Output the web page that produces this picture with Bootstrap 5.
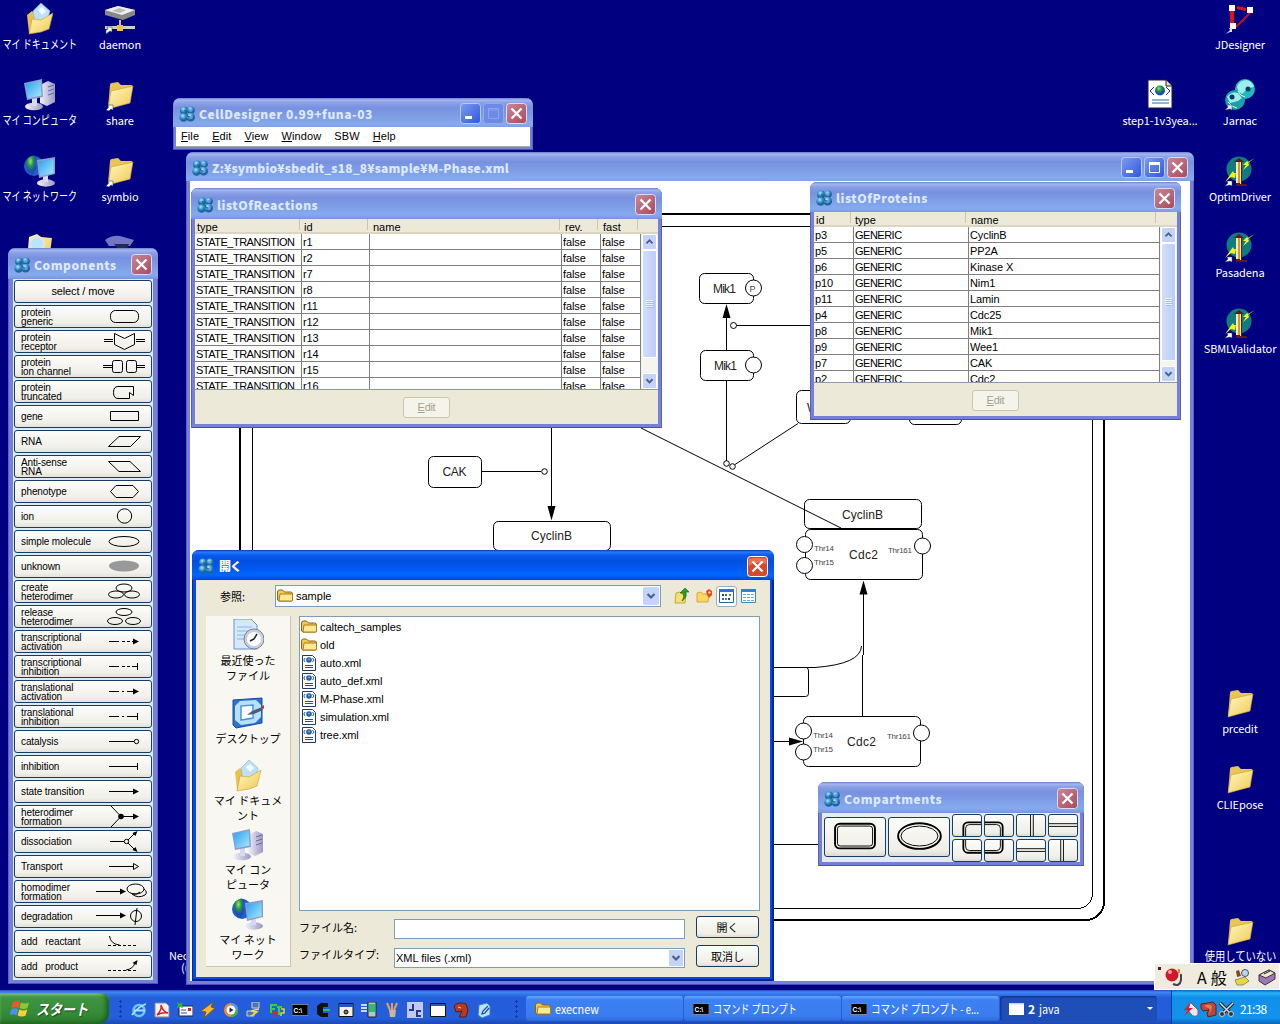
<!DOCTYPE html>
<html lang="ja">
<head>
<meta charset="utf-8">
<title>CellDesigner</title>
<link href="https://cdn.jsdelivr.net/npm/bootstrap@5.3.0/dist/css/bootstrap.min.css" rel="stylesheet">
<style>
body{width:1280px;height:1024px;overflow:hidden;background:#000080;position:relative;font:11px/14px "Liberation Sans","Noto Sans CJK JP",sans-serif;color:#000}
svg{display:block;flex:none}
.jp{font-family:"Noto Sans CJK JP",sans-serif}
.desk{display:grid;grid-template-columns:repeat(16,80px);grid-template-rows:repeat(13,76px);position:absolute;inset:0 0 auto 0}
.ico{display:flex;flex-direction:column;align-items:center;padding-top:3px;color:#fff;min-width:0;font:11px/14px "Noto Sans CJK JP",sans-serif}
.ico span{white-space:nowrap;margin-top:2px;letter-spacing:-.1px}
.ico .sq{transform:scaleX(.75);font-size:12px;letter-spacing:.1px}
.ico .sk{transform:scaleX(.86);font-size:12px}
.win{position:absolute;background:#7680d8;border-radius:7px 7px 0 0;padding:0 4px 4px;display:flex;flex-direction:column;box-shadow:inset 1px 0 #5a62c0,inset -1px 0 #5a62c0,inset 0 -1px #4a50b4;overflow:hidden}
.tbar{height:31px;margin:0 -4px;padding:2px 6px 0 6px;flex:none;display:flex;align-items:center;background:linear-gradient(#6a80cc 0,#a3b6f0 2px,#8aa0e6 5px,#7891df 10px,#7f9ee6 19px,#84aaee 26px,#80a0e8 29px,#7890de 31px);border-radius:7px 7px 0 0;color:#dce8fb;font:bold 12px/16px "Noto Sans CJK JP",sans-serif}
.tbar b{margin-left:4px;flex:1;white-space:nowrap;letter-spacing:.55px}
.tbar .wb{margin-left:2px}
.face{background:#ece9d8}
#w1{left:173px;top:98px;width:360px;height:52px}
#w1 .tbar{height:29px}
#w2{left:186px;top:152px;width:1008px;height:833px}
#w2 .tbar{height:29px}
#w2 .tbar b{letter-spacing:.2px}
#w3{left:191px;top:188px;width:471px;height:240px}
#w4{left:810px;top:182px;width:371px;height:238px}
#w4 .tbar{height:30px}
#w5{left:8px;top:248px;width:150px;height:736px}
#w6{left:818px;top:782px;width:266px;height:84px}
#dlg{left:192px;top:550px;width:582px;height:431px;background:#0a4be0;box-shadow:inset 1px 0 #0026a8,inset -2px 0 #0026a8,inset 0 -2px #00208c}
#dlg .tbar{height:30px;background:linear-gradient(#0038b8 0,#2a7cf8 2px,#0a5cf0 5px,#0050e0 11px,#0058f0 18px,#0066ff 25px,#0050e0 29px,#003cc0 30px);color:#fff}
.menu{background:#fff;height:20px;display:flex;gap:13px;padding:2px 5px;font-size:11px;letter-spacing:.1px;line-height:15px;border-bottom:1px solid #aaa;margin:0 -1px}
.grid{border-collapse:separate;border-spacing:0;table-layout:fixed;width:100%;background:#fff}
.grid td{height:16px;border-right:1px solid #808080;border-bottom:1px solid #808080;padding:1px 1px 0;line-height:14px;white-space:nowrap;letter-spacing:-.1px}
.grid .up{letter-spacing:-.5px}
.hdr{height:15px;display:flex;flex:none;border-bottom:2px solid #dbd6c2;line-height:16px}
.hdr div{border-right:1px solid #c9c5b2;padding-left:2px;height:11px}
.hdr div+div{padding-left:5px}
.tb{height:156px;display:flex;overflow:hidden;flex:none;border-bottom:1px solid #8a98ac;background:#fff}
.sb{width:17px;flex:none;display:flex;flex-direction:column;background:#f6f4ee;padding:0 1px}
.arr{display:block;height:16px;border:1px solid #fff;border-radius:2px;background:#c3d3fc}
.thumb{flex:none;background:linear-gradient(90deg,#d0defd,#bccdfa);border:1px solid #fff;border-radius:2px;display:flex;align-items:center;justify-content:center}
.dbtn{width:47px;height:21px;border:1px solid #cac6b4;border-radius:3px;background:#f5f4ea;color:#a5a290;text-align:center;line-height:19px;letter-spacing:-.3px}
.cmp{background:#d9eaf2;padding:1px 1px 0 1px;flex:1;display:flex;flex-direction:column;gap:2px;margin:0 1px}
.cb{height:23px;flex:none;border:1px solid #173c68;border-radius:3px;background:linear-gradient(#fcfcfa,#f0efe8 80%,#e3e1d8);display:flex;align-items:center;padding-left:6px;font-size:10px;line-height:9px;letter-spacing:-.12px}
.cb svg{margin:-1px 1px -1px auto}
.ln{fill:none;stroke:#000;stroke-width:1}
.xb{border:1px solid #173c68;border-radius:3px;background:linear-gradient(#fcfcfa,#efeee6 85%,#dedbd0);overflow:hidden}
.fld{background:#fff;border:1px solid #7f9db9;display:flex;align-items:center}
.side{width:85px;background:#f8f7f2;border-right:1px solid #c9c5b2;border-bottom:1px solid #c9c5b2;position:relative;display:flex;flex-direction:column;align-items:center;font:11px/15px "Noto Sans CJK JP",sans-serif;text-align:center}
.fr{height:18px;display:flex;align-items:center;gap:3px;padding-left:1px;letter-spacing:-.05px}
#task{position:absolute;left:0;top:990px;width:1280px;height:34px;background:linear-gradient(#1f49b8 0,#3f86f4 2px,#3577ea 4px,#245ddb 8px,#245edc 28px,#1c48b0 34px);display:flex;align-items:stretch;color:#fff;font:12px/16px "Noto Sans CJK JP",sans-serif}
.start{width:109px;margin-top:3px;background:linear-gradient(#5eac56 0,#3f9440 5px,#358b37 20px,#2b7a2d 31px);border-radius:0 8px 10px 0;box-shadow:inset -3px -1px 4px #1c5e1f,inset 0 2px 2px #8acb80;display:flex;align-items:center;padding-left:10px;gap:6px;font:italic bold 15px/20px "Noto Sans CJK JP",sans-serif;text-shadow:1px 1px 1px #1c4a1d}
.start span{transform:scaleX(.87);transform-origin:0 0}
.tk{width:157px;height:25px;margin:6px 1px 0 0;background:linear-gradient(#6aa4fa,#3c81f3 4px,#3a7cf0 20px,#2f68d8);border-radius:3px;display:flex;align-items:center;padding-left:9px;gap:4px;white-space:nowrap;flex:none}
.tk span{transform-origin:0 0}
.tk.on{background:#1e4fb8;box-shadow:inset 1px 1px 2px #10307c}
.tray{width:109px;margin-left:auto;background:linear-gradient(#0c60c8 0,#27b1f5 3px,#1290e9 7px,#1292ea 28px,#0c64c0 34px);border-left:1px solid #0a3fa8;display:flex;align-items:center;padding:4px 0 0 10px;gap:1px}
.dots{width:6px;height:20px;margin-top:9px;background:radial-gradient(circle,#143a9c 1px,transparent 1.3px) 0 0/5px 5px}
.ime{position:absolute;left:1154px;top:963px;width:126px;height:27px;background:#efecdf;border:1px solid #fff;display:flex;align-items:center;font:16px/20px "Noto Sans CJK JP",sans-serif}
</style>
<script src="https://cdn.jsdelivr.net/npm/bootstrap@5.3.0/dist/js/bootstrap.bundle.min.js"></script>
</head>
<body>
<svg width="0" height="0" class="position-absolute">
<defs>
<linearGradient id="gf" x1="0" y1="0" x2="1" y2="1"><stop offset="0" stop-color="#fff9c4"/><stop offset="1" stop-color="#f0c850"/></linearGradient>
<linearGradient id="gs" x1="0" y1="0" x2="1" y2="1"><stop offset="0" stop-color="#2e9cec"/><stop offset="1" stop-color="#a5ecff"/></linearGradient>
<linearGradient id="gg" x1="0" y1="0" x2="1" y2="0"><stop offset="0" stop-color="#f2f2fa"/><stop offset="1" stop-color="#9a98c4"/></linearGradient>
<radialGradient id="gw" cx=".4" cy=".3"><stop offset="0" stop-color="#9be86a"/><stop offset=".5" stop-color="#2a9a3a"/><stop offset="1" stop-color="#1c50b0"/></radialGradient>
<radialGradient id="gl" cx=".4" cy=".3"><stop offset="0" stop-color="#b4e6fa"/><stop offset=".45" stop-color="#54acdc"/><stop offset="1" stop-color="#1a669e"/></radialGradient>
<linearGradient id="gc" x1="0" y1="0" x2="1" y2="1"><stop offset="0" stop-color="#c88a98"/><stop offset="1" stop-color="#a8485a"/></linearGradient>
<linearGradient id="gb" x1="0" y1="0" x2="1" y2="1"><stop offset="0" stop-color="#7d9cf2"/><stop offset="1" stop-color="#2f55dc"/></linearGradient>
<symbol id="logo" viewBox="0 0 16 16"><circle cx="5" cy="4.500" r="4" fill="url(#gl)"/><circle cx="12" cy="4.200" r="3.800" fill="url(#gl)"/><circle cx="4.600" cy="11.500" r="4.200" fill="url(#gl)"/><circle cx="11.600" cy="11.200" r="4.400" fill="url(#gl)"/><circle cx="12" cy="4.500" r="1.300" fill="#7a96e2"/><circle cx="12" cy="11.500" r="1.500" fill="#7a96e2"/><path d="M5 4.500q3 0 3 3.500t3 3" fill="none" stroke="#1c5f96" stroke-width="1"/></symbol>
<symbol id="cls" viewBox="0 0 21 21"><rect x=".5" y=".5" width="20" height="20" rx="3" fill="url(#gc)" stroke="#d8dcf8"/><path d="M5.500 5.500l10 10M15.500 5.500l-10 10" stroke="#fff" stroke-width="2.300"/></symbol>
<symbol id="clr" viewBox="0 0 21 21"><rect x=".5" y=".5" width="20" height="20" rx="3" fill="#d8482a" stroke="#fff"/><path d="M1.500 3q9-2 18 0v5q-9-4-18 2z" fill="#e87458"/><path d="M5.500 5.500l10 10M15.500 5.500l-10 10" stroke="#fff" stroke-width="2.300"/></symbol>
<symbol id="min" viewBox="0 0 21 21"><rect x=".5" y=".5" width="20" height="20" rx="3" fill="url(#gb)" stroke="#b8c8fa"/><path d="M5 13h7v3H5z" fill="#fff"/></symbol>
<symbol id="max" viewBox="0 0 21 21"><rect x=".5" y=".5" width="20" height="20" rx="3" fill="url(#gb)" stroke="#b8c8fa"/><path d="M5.500 5.500h10v10h-10z" fill="none" stroke="#fff"/><path d="M5 5h11v3H5z" fill="#fff"/></symbol>
<symbol id="mxd" viewBox="0 0 21 21"><rect x=".5" y=".5" width="20" height="20" rx="3" fill="#6d8be2" stroke="#94a8ee"/><path d="M5.500 5.500h10v10h-10zM5 7h11" fill="none" stroke="#8ba4ee"/></symbol>
<symbol id="folder" viewBox="0 0 32 32"><path d="M4 29L6 6q0-2 2-2l6-1 3 3 10 0q2 0 1 2l-2 16z" fill="#e8c45a"/><path d="M4 30L7 12 29 7l-3 17z" fill="url(#gf)" stroke="#c89a28" stroke-width=".6"/></symbol>
<symbol id="short" viewBox="0 0 32 32"><use href="#folder"/><path d="M2 31l3-3-1-2h5v5l-2-1-2 2z" fill="#fff" stroke="#345" stroke-width=".6"/></symbol>
<symbol id="mydoc" viewBox="0 0 32 32"><path d="M3 12l5-4 4 4v18H5z" fill="#e9c14c"/><path d="M9 8L17 0l9 8-4 14-11-2z" fill="#bfe0fa" stroke="#7ab0e0" stroke-width=".6"/><path d="M14 7l4-3 4 4-4 4z" fill="#f2fbff"/><path d="M5 31l3-15 9 1 12-7-4 16-8 3z" fill="url(#gf)" stroke="#c89a28" stroke-width=".6"/></symbol>
<symbol id="pc" viewBox="0 0 32 32"><path d="M16 6l8-4 7 3v18l-8 4-7-3z" fill="url(#gg)"/><path d="M24 8l6-2M24 12l6-2M24 16l6-2" stroke="#6a68a0"/><ellipse cx="10" cy="27.500" rx="9" ry="3.800" fill="url(#gg)"/><path d="M8 19h5v8H8z" fill="#d8d8ee"/><path d="M0 4l18-4 1 18-16 3z" fill="#8e9ccc"/><path d="M1.500 5l15-3.500 1 15-13.500 2.800z" fill="url(#gs)"/></symbol>
<symbol id="net" viewBox="0 0 32 32"><circle cx="10" cy="11" r="10" fill="#2060c8"/><path d="M3 4q6-6 10-2l-3 6 3 4-4 8q-6-3-7-8z" fill="url(#gw)"/><ellipse cx="22" cy="28" rx="9" ry="3.700" fill="url(#gg)"/><path d="M19 20h5v7h-5z" fill="#d8d8ee"/><path d="M13 5l18-3v17l-16 4z" fill="#8e9ccc"/><path d="M14.500 6.500l15-2.500v14l-13.500 3.200z" fill="url(#gs)"/></symbol>
<symbol id="drive" viewBox="0 0 32 32"><path d="M1 7l13-4 17 4v5l-12 5L1 12z" fill="#888"/><path d="M1 7l13-4 17 4-13 5z" fill="#eee"/><path d="M8 8l7-3 7 2-6 3z" fill="#bbb"/><path d="M16 17v6" stroke="#d8c060" stroke-width="2"/><path d="M1 24.500h30" stroke="#ccc" stroke-width="3"/><path d="M13 22h6v6h-6z" fill="#f0c040"/><path d="M2 31v-4l2-1-1-2h5v5l-2-1z" fill="#fff" stroke="#345" stroke-width=".6"/></symbol>
<symbol id="srch" viewBox="0 0 32 32"><path d="M3 30L5 6l8-3 4 3 11 1-3 23z" fill="url(#gf)"/><circle cx="13" cy="13" r="7" fill="#b8e6fa" stroke="#e4e4e4" stroke-width="2"/></symbol>
<symbol id="car" viewBox="0 0 32 32"><path d="M1 9q7-5 15-4l14 4-4 6H5z" fill="#7474c8"/><path d="M10 13h15l-2 5h-9z" fill="#222a50"/></symbol>
<symbol id="jd" viewBox="0 0 32 32"><path d="M8 8v12" stroke="#e01020" stroke-width="4"/><path d="M13 4.500l9 2" stroke="#e01020" stroke-width="3"/><path d="M26 10L12 24" stroke="#c01030" stroke-width="2"/><path d="M5 2h6v6H5zM23 4h6v6h-6zM6 20h6v6H6z" fill="#fffbe8"/><path d="M2 31l4-4-1-2h3v4H6z" fill="#ddd"/></symbol>
<symbol id="jar" viewBox="0 0 32 32"><circle cx="21" cy="10" r="10" fill="#24b8bc"/><circle cx="11" cy="21" r="10" fill="#1aa0a8"/><path d="M13 8q2-7 10-7 6 2 7 7l-6 1-6 6q-4-2-5-7zM3 18q4-6 11-4l4 5-4 3-8 2z" fill="#9eeee9"/><path d="M14 12q2 5 7 6M4 23q3 5 9 6" stroke="#e8fffc" fill="none"/><circle cx="24" cy="10" r="2.500" fill="#0a3a68"/><circle cx="8" cy="18" r="2.500" fill="#0a3a68"/><path d="M1 31l3-3-1-2h5v5l-2-1z" fill="#eee" stroke="#345" stroke-width=".5"/></symbol>
<symbol id="opt" viewBox="0 0 32 32"><circle cx="15" cy="14" r="12.500" fill="#107c80"/><path d="M10 7l5-4 5 4h-2v22h5v2h-11V7z" fill="#601818"/><path d="M12 7h2v21h-2zM16 7h1v22h-1z" fill="#fff0a0"/><path d="M14 7h2v21h-2z" fill="#c89848"/><path d="M31 3l-7 4-1-1-4 4h3l-3 5 6-5-1-2zM1 27l5-7 3-4 1 2 2 0-1 5-4-1z" fill="#f4f020"/><path d="M1 31l3-3-1-2h5v5l-2-1z" fill="#fff" stroke="#345" stroke-width=".5"/></symbol>
<symbol id="xdoc" viewBox="0 0 32 32"><path d="M4 1h18l6 6v22H4z" fill="#fff" stroke="#222"/><path d="M22 1v6h6" fill="#ddd" stroke="#222"/><circle cx="16" cy="11.500" r="5" fill="url(#gw)"/><path d="M10 8l-4 4 4 4M22 8l4 4-4 4" fill="none" stroke="#2030a0"/><path d="M8 21h17M8 24h17" stroke="#2a6a98"/></symbol>
<symbol id="sf" viewBox="0 0 16 16"><path d="M.5 4q0-2 2-2h3l2 2h6q2 0 2 2v6q0 1-1 1H2L.5 12z" fill="#f4c94c" stroke="#8a6410"/><path d="M2 13L3 6h12.500v6q0 1-1 1z" fill="#ffe998" stroke="#a87c18"/></symbol>
<symbol id="xf" viewBox="0 0 16 16"><path d="M1.500.5h10l3 3v12h-13z" fill="#fff" stroke="#223a60"/><path d="M4 3L2.800 5 4 7M11.500 3L13 5l-1.500 2M4 10.500h8M4 12.500h8" fill="none" stroke="#20589c"/><circle cx="8" cy="5" r="2.800" fill="#1c60a8"/><circle cx="8" cy="4.600" r="1" fill="#9ad"/></symbol>
<symbol id="cmd" viewBox="0 0 16 16"><path d="M0 2.500h16v11H0z" fill="#000" stroke="#b8b8b8" stroke-width=".6"/><text x="1.500" y="10.500" font-size="6.500" font-weight="bold" fill="#fff" font-family="Liberation Sans,sans-serif">C:\</text></symbol>
<symbol id="dn" viewBox="0 0 14 16"><path d="M3.500 6l3.500 3.500L10.500 6" fill="none" stroke="#4d6185" stroke-width="2.200"/></symbol>
<symbol id="up" viewBox="0 0 14 16"><path d="M3.500 9.500L7 6l3.500 3.500" fill="none" stroke="#4d6185" stroke-width="2.200"/></symbol>
<symbol id="grip" viewBox="0 0 8 8"><path d="M0 .5h7M0 2.500h7M0 4.500h7M0 6.500h7" stroke="#eef4fe"/><path d="M1 1.500h7M1 3.500h7M1 5.500h7M1 7.500h7" stroke="#9ab0e8" stroke-width=".7"/></symbol>
</defs>
</svg>

<div class="desk">
<div class="ico" style="grid-area:1/1"><svg width="32" height="32"><use href="#mydoc"/></svg><span class="sq">マイ ドキュメント</span></div>
<div class="ico" style="grid-area:2/1"><svg width="32" height="32"><use href="#pc"/></svg><span class="sq">マイ コンピュータ</span></div>
<div class="ico" style="grid-area:3/1"><svg width="32" height="32"><use href="#net"/></svg><span class="sq">マイ ネットワーク</span></div>
<div class="ico" style="grid-area:4/1"><svg width="32" height="32"><use href="#srch"/></svg></div>
<div class="ico" style="grid-area:1/2"><svg width="32" height="32"><use href="#drive"/></svg><span>daemon</span></div>
<div class="ico" style="grid-area:2/2"><svg width="32" height="32"><use href="#short"/></svg><span>share</span></div>
<div class="ico" style="grid-area:3/2"><svg width="32" height="32"><use href="#short"/></svg><span>symbio</span></div>
<div class="ico" style="grid-area:4/2"><svg width="32" height="32"><use href="#car"/></svg></div>
<div class="ico align-items-start" style="grid-area:13/3;padding:37px 0 0 9px;line-height:12px"><span class="m-0">Neo</span><span class="m-0 ps-2 ms-1">((</span></div>
<div class="ico" style="grid-area:2/15"><svg width="32" height="32"><use href="#xdoc"/></svg><span>step1-1v3yea...</span></div>
<div class="ico" style="grid-area:1/16"><svg width="32" height="32"><use href="#jd"/></svg><span>JDesigner</span></div>
<div class="ico" style="grid-area:2/16"><svg width="32" height="32"><use href="#jar"/></svg><span>Jarnac</span></div>
<div class="ico" style="grid-area:3/16"><svg width="32" height="32"><use href="#opt"/></svg><span>OptimDriver</span></div>
<div class="ico" style="grid-area:4/16"><svg width="32" height="32"><use href="#opt"/></svg><span>Pasadena</span></div>
<div class="ico" style="grid-area:5/16"><svg width="32" height="32"><use href="#opt"/></svg><span>SBMLValidator</span></div>
<div class="ico" style="grid-area:10/16"><svg width="32" height="32"><use href="#folder"/></svg><span>prcedit</span></div>
<div class="ico" style="grid-area:11/16"><svg width="32" height="32"><use href="#folder"/></svg><span>CLIEpose</span></div>
<div class="ico" style="grid-area:13/16"><svg width="32" height="32"><use href="#folder"/></svg><span class="sk">使用していない</span></div>
</div>

<section class="win" id="w1">
<div class="tbar"><svg width="16" height="16"><use href="#logo"/></svg><b>CellDesigner 0.99+funa-03</b><svg class="wb" width="21" height="21"><use href="#min"/></svg><svg class="wb" width="21" height="21"><use href="#mxd"/></svg><svg class="wb" width="21" height="21"><use href="#cls"/></svg></div>
<div class="menu"><span><u>F</u>ile</span><span><u>E</u>dit</span><span><u>V</u>iew</span><span><u>W</u>indow</span><span>SBW</span><span><u>H</u>elp</span></div>
</section>

<section class="win" id="w2">
<div class="tbar"><svg width="16" height="16"><use href="#logo"/></svg><b>Z:¥symbio¥sbedit_s18_8¥sample¥M-Phase.xml</b><svg class="wb" width="21" height="21"><use href="#min"/></svg><svg class="wb" width="21" height="21"><use href="#max"/></svg><svg class="wb" width="21" height="21"><use href="#cls"/></svg></div>
<svg width="1000" height="800" viewBox="190 181 1000 800" style="background:#fff" font-family="Liberation Sans,sans-serif" font-size="12">
<g class="ln" shape-rendering="crispEdges">
<rect x="240" y="214" width="864" height="706" rx="18" stroke-width="2"/>
<rect x="252.500" y="226.500" width="840" height="682" rx="15"/>
</g>
<g class="ln">
<path d="M551.500 428V508M482 471.500H541M641 428L841 528M726.500 316V350M736.500 325.500H812M726.500 381V461M735 464.500L798 423.500M863.500 592V655M862.500 655V716M773 667.500H815Q861 664 861.500 646M773 741.500H790M773 844.500H820"/>
<circle cx="544.500" cy="471.500" r="2.800"/><circle cx="733.500" cy="325.500" r="3"/><circle cx="726.500" cy="463.500" r="2.800"/><circle cx="732.500" cy="466.500" r="2.800"/>
<rect x="428.500" y="456.500" width="53" height="31" rx="5"/>
<rect x="493.500" y="521.500" width="117" height="29" rx="5"/>
<rect x="804.500" y="499.500" width="117" height="29" rx="5"/>
<rect x="805.500" y="529.500" width="117" height="50" rx="5"/>
<rect x="803.500" y="716.500" width="117" height="50" rx="5"/>
<rect x="699.500" y="273.500" width="54" height="30" rx="5"/>
<rect x="700.500" y="350.500" width="53" height="30" rx="5"/>
<rect x="796.500" y="390.500" width="54" height="33" rx="5"/>
<rect x="909.500" y="391.500" width="52" height="33" rx="5"/>
<path d="M770 696.500H805.500q3 0 3-3V671q0-3-2-3.500"/>
</g>
<g fill="#fff" stroke="#000"><circle cx="753.500" cy="288" r="8"/><circle cx="753.500" cy="365" r="8"/><circle cx="804.500" cy="544.500" r="8"/><circle cx="804.500" cy="565.500" r="8"/><circle cx="922.500" cy="546" r="8"/><circle cx="803.500" cy="731" r="8"/><circle cx="803.500" cy="752" r="8"/><circle cx="921.500" cy="733" r="8"/></g>
<path d="M551.500 520.500l-4-14.500h8zM726.500 304l-4 14h8zM863.500 580.500l-4 14h8zM803 741.500l-14-4v8z"/>
<g fill="#222"><text x="442.500" y="475.500" textLength="24">CAK</text><text x="531" y="540" textLength="41">CyclinB</text><text x="842" y="519" textLength="41">CyclinB</text><text x="849" y="559" textLength="29">Cdc2</text><text x="847" y="746" textLength="29">Cdc2</text><text x="713" y="293" textLength="23">Mik1</text><text x="714" y="370" textLength="23">Mik1</text><text x="807" y="411.500">Wee1</text></g>
<g fill="#444" font-size="8"><text x="749.500" y="291.500" font-size="9">P</text><text x="814" y="551" textLength="20">Thr14</text><text x="814" y="565" textLength="20">Thr15</text><text x="888" y="553" textLength="24">Thr161</text><text x="813" y="738" textLength="20">Thr14</text><text x="813" y="752" textLength="20">Thr15</text><text x="887" y="739" textLength="24">Thr161</text></g>
</svg>
</section>

<section class="win" id="w3">
<div class="tbar"><svg width="16" height="16"><use href="#logo"/></svg><b>listOfReactions</b><svg class="wb" width="21" height="21"><use href="#cls"/></svg></div>
<div class="face flex-fill d-flex flex-column">
<div class="hdr"><div style="width:105px">type</div><div style="width:68px;padding-left:4px">id</div><div style="width:192px">name</div><div style="width:38px">rev.</div><div style="width:40px">fast</div></div>
<div class="tb"><table class="grid"><colgroup><col style="width:107px"><col style="width:68px"><col style="width:192px"><col style="width:39px"><col></colgroup><tbody>
<tr><td class="up">STATE_TRANSITION</td><td>r1</td><td></td><td>false</td><td>false</td></tr>
<tr><td class="up">STATE_TRANSITION</td><td>r2</td><td></td><td>false</td><td>false</td></tr>
<tr><td class="up">STATE_TRANSITION</td><td>r7</td><td></td><td>false</td><td>false</td></tr>
<tr><td class="up">STATE_TRANSITION</td><td>r8</td><td></td><td>false</td><td>false</td></tr>
<tr><td class="up">STATE_TRANSITION</td><td>r11</td><td></td><td>false</td><td>false</td></tr>
<tr><td class="up">STATE_TRANSITION</td><td>r12</td><td></td><td>false</td><td>false</td></tr>
<tr><td class="up">STATE_TRANSITION</td><td>r13</td><td></td><td>false</td><td>false</td></tr>
<tr><td class="up">STATE_TRANSITION</td><td>r14</td><td></td><td>false</td><td>false</td></tr>
<tr><td class="up">STATE_TRANSITION</td><td>r15</td><td></td><td>false</td><td>false</td></tr>
<tr><td class="up">STATE_TRANSITION</td><td>r16</td><td></td><td>false</td><td>false</td></tr>
</tbody></table><div class="sb"><i class="arr"><svg width="13" height="14"><use href="#up"/></svg></i><i class="thumb" style="height:108px"><svg width="8" height="8"><use href="#grip"/></svg></i><i class="arr mt-auto"><svg width="13" height="14"><use href="#dn"/></svg></i></div></div>
<div class="d-flex justify-content-center pt-2" style="margin-top:-1px"><div class="dbtn"><u>E</u>dit</div></div>
</div>
</section>

<section class="win" id="w4">
<div class="tbar"><svg width="16" height="16"><use href="#logo"/></svg><b>listOfProteins</b><svg class="wb" width="21" height="21"><use href="#cls"/></svg></div>
<div class="face flex-fill d-flex flex-column">
<div class="hdr"><div style="width:37px">id</div><div style="width:115px;padding-left:4px">type</div><div style="width:190px">name</div></div>
<div class="tb"><table class="grid"><colgroup><col style="width:40px"><col style="width:115px"><col></colgroup><tbody>
<tr><td>p3</td><td class="up">GENERIC</td><td>CyclinB</td></tr>
<tr><td>p5</td><td class="up">GENERIC</td><td>PP2A</td></tr>
<tr><td>p6</td><td class="up">GENERIC</td><td>Kinase X</td></tr>
<tr><td>p10</td><td class="up">GENERIC</td><td>Nim1</td></tr>
<tr><td>p11</td><td class="up">GENERIC</td><td>Lamin</td></tr>
<tr><td>p4</td><td class="up">GENERIC</td><td>Cdc25</td></tr>
<tr><td>p8</td><td class="up">GENERIC</td><td>Mik1</td></tr>
<tr><td>p9</td><td class="up">GENERIC</td><td>Wee1</td></tr>
<tr><td>p7</td><td class="up">GENERIC</td><td>CAK</td></tr>
<tr><td>p2</td><td class="up">GENERIC</td><td>Cdc2</td></tr>
</tbody></table><div class="sb"><i class="arr"><svg width="13" height="14"><use href="#up"/></svg></i><i class="thumb" style="height:118px"><svg width="8" height="8"><use href="#grip"/></svg></i><i class="arr mt-auto"><svg width="13" height="14"><use href="#dn"/></svg></i></div></div>
<div class="d-flex justify-content-center pt-2" style="margin-top:-1px"><div class="dbtn"><u>E</u>dit</div></div>
</div>
</section>

<section class="win" id="w5">
<div class="tbar"><svg width="16" height="16"><use href="#logo"/></svg><b>Components</b><svg class="wb" width="21" height="21"><use href="#cls"/></svg></div>
<div class="cmp">
<div class="cb justify-content-center p-0" style="font-size:11px">select / move</div>
<div class="cb">protein<br>generic<svg class="ln" width="54" height="23" viewBox="96 0 54 23"><rect x="110.500" y="5.500" width="28" height="12" rx="5"/></svg></div>
<div class="cb">protein<br>receptor<svg class="ln" width="54" height="23" viewBox="96 0 54 23"><path d="M104 9.500h9M104 11.500h9M136 9.500h9M136 11.500h9M114.500 3.500l10 5 10-5v11l-10 5-10-5z"/></svg></div>
<div class="cb">protein<br>ion channel<svg class="ln" width="54" height="23" viewBox="96 0 54 23"><path d="M103 10.500h9M103 12.500h9M137 10.500h8M137 12.500h8"/><rect x="112.500" y="5.500" width="10" height="12" rx="2"/><rect x="126.500" y="5.500" width="10" height="12" rx="2"/></svg></div>
<div class="cb">protein<br>truncated<svg class="ln" width="54" height="23" viewBox="96 0 54 23"><path d="M133.500 6.500H118q-4.500 0-4.500 6t4.500 6h11.500v-6l4 3z"/></svg></div>
<div class="cb">gene<svg class="ln" width="54" height="23" viewBox="96 0 54 23"><path d="M110.500 6.500h28v9h-28z"/></svg></div>
<div class="cb">RNA<svg class="ln" width="54" height="23" viewBox="96 0 54 23"><path d="M119 6.500h21.500l-10 10H108.500z"/></svg></div>
<div class="cb">Anti-sense<br>RNA<svg class="ln" width="54" height="23" viewBox="96 0 54 23"><path d="M108.500 6.500H130l10.500 10H119z"/></svg></div>
<div class="cb">phenotype<svg class="ln" width="54" height="23" viewBox="96 0 54 23"><path d="M116 5.500h17l5.500 6-5.500 6h-17l-5.500-6z"/></svg></div>
<div class="cb">ion<svg class="ln" width="54" height="23" viewBox="96 0 54 23"><circle cx="124.500" cy="11" r="7.200"/></svg></div>
<div class="cb">simple molecule<svg class="ln" width="54" height="23" viewBox="96 0 54 23"><ellipse cx="124" cy="11.500" rx="15" ry="5"/></svg></div>
<div class="cb">unknown<svg width="54" height="23" viewBox="96 0 54 23"><ellipse cx="124" cy="11" rx="15" ry="5.500" fill="#999"/></svg></div>
<div class="cb">create<br>heterodimer<svg class="ln" width="54" height="23" viewBox="96 0 54 23"><ellipse cx="124" cy="8" rx="8" ry="4"/><ellipse cx="116" cy="14.500" rx="7.500" ry="3.500"/><ellipse cx="132" cy="14.500" rx="7.500" ry="3.500"/></svg></div>
<div class="cb">release<br>heterodimer<svg class="ln" width="54" height="23" viewBox="96 0 54 23"><ellipse cx="124" cy="7" rx="8" ry="3.500"/><ellipse cx="115" cy="16" rx="7.500" ry="3.500"/><ellipse cx="133" cy="16" rx="7.500" ry="3.500"/></svg></div>
<div class="cb">transcriptional<br>activation<svg width="54" height="23" viewBox="96 0 54 23"><path class="ln" d="M109 11.500h10M122 11.500h3M127 11.500h3M132 11.500h4"/><path d="M139 11.500l-6-3v6z"/></svg></div>
<div class="cb">transcriptional<br>inhibition<svg class="ln" width="54" height="23" viewBox="96 0 54 23"><path d="M109 11.500h10M122 11.500h3M127 11.500h3M132 11.500h5M137.500 8v7"/></svg></div>
<div class="cb">translational<br>activation<svg width="54" height="23" viewBox="96 0 54 23"><path class="ln" d="M109 11.500h10M122 11.500h2M127 11.500h9"/><path d="M139 11.500l-6-3v6z"/></svg></div>
<div class="cb">translational<br>inhibition<svg class="ln" width="54" height="23" viewBox="96 0 54 23"><path d="M109 11.500h10M122 11.500h2M127 11.500h10M137.500 8v7"/></svg></div>
<div class="cb">catalysis<svg class="ln" width="54" height="23" viewBox="96 0 54 23"><path d="M109 11.500h25"/><circle cx="136.500" cy="11.500" r="2.200"/></svg></div>
<div class="cb">inhibition<svg class="ln" width="54" height="23" viewBox="96 0 54 23"><path d="M109 11.500h28M137.500 8v7"/></svg></div>
<div class="cb">state transition<svg width="54" height="23" viewBox="96 0 54 23"><path class="ln" d="M109 11.500h25"/><path d="M139 11.500l-6-3v6z"/></svg></div>
<div class="cb">heterodimer<br>formation<svg width="54" height="23" viewBox="96 0 54 23"><path class="ln" d="M111 1l10 10.500L111 22M121 11.500h13"/><circle cx="121" cy="11.500" r="2.800"/><path d="M139 11.500l-6-3v6z"/></svg></div>
<div class="cb">dissociation<svg width="54" height="23" viewBox="96 0 54 23"><path class="ln" d="M110 11.500h14M128 10l7-7M128 13l7 7"/><circle class="ln" cx="126.500" cy="11.500" r="2.200"/><path d="M137.500 1l-5 2 3 3zM137.500 22l-5-2 3-3z"/></svg></div>
<div class="cb">Transport<svg class="ln" width="54" height="23" viewBox="96 0 54 23"><path d="M109 11.500h24M133.500 8.500v6l5-3z"/></svg></div>
<div class="cb">homodimer<br>formation<svg width="54" height="23" viewBox="96 0 54 23"><path class="ln" d="M96 11.500h26"/><path d="M126 11.500l-6-3v6z"/><g class="ln"><ellipse cx="135.500" cy="9" rx="8.500" ry="5"/><path d="M144 9q4 3 1 6-7 4-13-1 5 1 8-2"/></g></svg></div>
<div class="cb">degradation<svg width="54" height="23" viewBox="96 0 54 23"><path class="ln" d="M96 10.500h26M137 3l-2 17"/><path d="M126 10.500l-6-3v6z"/><circle class="ln" cx="136" cy="11" r="5.500"/></svg></div>
<div class="cb">add &nbsp; reactant<svg class="ln" width="54" height="23" viewBox="96 0 54 23"><path d="M109.500 6q1 8 10 9"/><path d="M108 15.500h29" stroke-dasharray="3 2"/></svg></div>
<div class="cb">add &nbsp; product<svg width="54" height="23" viewBox="96 0 54 23"><path class="ln" d="M126 15q7-1 9-7"/><path class="ln" d="M108 15.500h29" stroke-dasharray="3 2"/><path d="M137.500 5l-5 3 4 2z"/></svg></div>
</div>
</section>

<section class="win" id="w6">
<div class="tbar"><svg width="16" height="16"><use href="#logo"/></svg><b>Compartments</b><svg class="wb" width="21" height="21"><use href="#cls"/></svg></div>
<div class="flex-fill d-flex" style="background:#e4eceb;gap:2px;padding:1px 0 0 2px">
<svg class="xb" style="margin-top:3px" width="62" height="40" viewBox="824 817 62 40"><g class="ln"><rect x="834" y="823" width="42" height="26" rx="5" stroke-width="2"/><rect x="836.500" y="825.500" width="37" height="21" rx="3"/></g></svg>
<svg class="xb" style="margin-top:3px" width="62" height="40" viewBox="888 817 62 40"><g class="ln"><ellipse cx="919.500" cy="836" rx="22.500" ry="13.500" stroke-width="2"/><ellipse cx="919.500" cy="836" rx="19.500" ry="10.500"/></g></svg>
<div class="d-grid flex-shrink-0" style="grid-template-columns:repeat(4,30px);grid-auto-rows:23px;gap:2px">
<svg class="xb" width="30" height="23" viewBox="952 814 30 23"><g class="ln"><rect x="963" y="822" width="40" height="31" rx="5" stroke-width="2"/><rect x="965.500" y="824.500" width="35" height="26" rx="4"/></g></svg>
<svg class="xb" width="30" height="23" viewBox="984 814 30 23"><g class="ln"><rect x="963" y="822" width="40" height="31" rx="5" stroke-width="2"/><rect x="965.500" y="824.500" width="35" height="26" rx="4"/></g></svg>
<svg class="xb" width="30" height="23" viewBox="1016 814 30 23"><path class="ln" d="M1030.500 813v25M1033.500 813v25" stroke-width="1.500"/></svg>
<svg class="xb" width="30" height="23" viewBox="1048 814 30 23"><path class="ln" d="M1047 823.500h32M1047 826.500h32" stroke-width="1.500"/></svg>
<svg class="xb" width="30" height="23" viewBox="952 839 30 23"><g class="ln"><rect x="963" y="822" width="40" height="31" rx="5" stroke-width="2"/><rect x="965.500" y="824.500" width="35" height="26" rx="4"/></g></svg>
<svg class="xb" width="30" height="23" viewBox="984 839 30 23"><g class="ln"><rect x="963" y="822" width="40" height="31" rx="5" stroke-width="2"/><rect x="965.500" y="824.500" width="35" height="26" rx="4"/></g></svg>
<svg class="xb" width="30" height="23" viewBox="1016 839 30 23"><path class="ln" d="M1015 848.500h32M1015 851.500h32" stroke-width="1.500"/></svg>
<svg class="xb" width="30" height="23" viewBox="1048 839 30 23"><path class="ln" d="M1060.500 838v25M1063.500 838v25" stroke-width="1.500"/></svg>
</div></div>
</section>

<section class="win" id="dlg">
<div class="tbar"><svg width="16" height="16"><use href="#logo"/></svg><b style="letter-spacing:-1px;margin-left:5px">開く</b><svg width="21" height="21"><use href="#clr"/></svg></div>
<div class="face flex-fill d-flex flex-column" style="padding:5px 10px 0">
<div class="d-flex align-items-center flex-shrink-0" style="height:22px">
<span class="jp" style="width:69px;padding-left:14px">参照:</span>
<div class="fld" style="width:386px;height:22px;padding:0 1px"><svg width="16" height="16"><use href="#sf"/></svg><span style="margin-left:3px">sample</span><span class="ms-auto" style="background:#c3d3fc;border-radius:2px;padding:1px"><svg width="14" height="16"><use href="#dn"/></svg></span></div>
<svg style="margin-left:13px" width="16" height="16" viewBox="0 0 16 16"><path d="M1 15L2 5l4-1 2 2 4 1-1 8z" fill="#f8e070" stroke="#b08a20" stroke-width=".7"/><path d="M8 13q3-4 1-8H6l5-5 4 4h-3q1 6-4 9z" fill="#28a028" stroke="#105810" stroke-width=".6"/></svg>
<svg style="margin-left:6px" width="17" height="16" viewBox="0 0 17 16"><path d="M1 14L1 5l4-1 2 2 6 0-1 8z" fill="#f8d860" stroke="#c89020" stroke-width=".7"/><path d="M10 3l3-2 3 2v4l-3 3-2-3z" fill="#e84818"/><circle cx="13.500" cy="4.500" r="1.200" fill="#fd8"/></svg>
<div class="d-flex justify-content-center align-items-center" style="width:21px;height:21px;margin-left:3px;background:#fff;border:1px solid #98b0c4;border-radius:3px"><svg width="15" height="14" viewBox="0 0 15 14"><path d="M.5.5h14v13H.5z" fill="#fff" stroke="#2464a8"/><path d="M0 0h15v3H0z" fill="#2a74d0"/><path d="M3 5h2v2H3zM9 9h2v2H9z" fill="#444"/><path d="M6 5h2v2H6zM3 9h2v2H3z" fill="#2a64d0"/><path d="M10 5h2v2h-2zM6 9h2v2H6z" fill="#3a9848"/></svg></div>
<svg style="margin-left:4px" width="15" height="14" viewBox="0 0 15 14"><path d="M.5.5h14v13H.5z" fill="#fff" stroke="#3a84c8"/><path d="M0 0h15v3H0z" fill="#2a84d8"/><path d="M2 5.500h11M2 8.500h11M2 11.500h11" stroke="#6aa8e0" stroke-dasharray="3 1"/></svg>
</div>
<div class="d-flex" style="margin-top:9px">
<div class="side" style="height:351px">
<svg style="margin-top:3px" width="32" height="32" viewBox="0 0 32 32"><path d="M2 0h17l6 6v24H2z" fill="#d6e8fc" stroke="#6a90d0"/><path d="M5 8h15M5 12h12M5 16h10M5 20h10" stroke="#88b4ec"/><circle cx="22" cy="20" r="10" fill="#c8d0dc" stroke="#7a8090"/><circle cx="22" cy="20" r="7" fill="#fff"/><path d="M18 22l4-2 3-5" stroke="#222" fill="none" stroke-width="1.500"/></svg>
<span style="margin-top:2px">最近使った<br>ファイル</span>
<svg style="margin-top:14px" width="32" height="32" viewBox="0 0 32 32"><path d="M1 3l29-2v25L4 31l-3-3z" fill="#2a74d0" stroke="#1a4c98"/><path d="M3 9l5-5 16-1 5 5v12l-6 6-14 2-6-5z" fill="#b8e0fa"/><path d="M9 9l12-1v13l-12 2z" fill="#fff" stroke="#4a94e0" stroke-width="1.500"/><path d="M30 10L20 14l-5 4 7-1 9-4z" fill="#48607c"/><path d="M29 10l3-2v4z" fill="#d83020"/></svg>
<span style="margin-top:2px;letter-spacing:-.2px">デスクトップ</span>
<svg style="margin-top:14px" width="32" height="32"><use href="#mydoc"/></svg>
<span style="margin-top:1px">マイ ドキュメ<br>ント</span>
<svg style="margin-top:6px" width="32" height="32"><use href="#pc"/></svg>
<span style="margin-top:1px">マイ コン<br>ピュータ</span>
<svg style="margin-top:5px" width="32" height="34"><use href="#net"/></svg>
<span style="margin-top:1px">マイ ネット<br>ワーク</span>
</div>
<div class="d-flex flex-column" style="margin-left:8px;width:461px">
<div class="fld flex-column align-items-start" style="height:295px;padding-top:1px">
<div class="fr"><svg width="16" height="16"><use href="#sf"/></svg>caltech_samples</div>
<div class="fr"><svg width="16" height="16"><use href="#sf"/></svg>old</div>
<div class="fr"><svg width="16" height="16"><use href="#xf"/></svg>auto.xml</div>
<div class="fr"><svg width="16" height="16"><use href="#xf"/></svg>auto_def.xml</div>
<div class="fr"><svg width="16" height="16"><use href="#xf"/></svg>M-Phase.xml</div>
<div class="fr"><svg width="16" height="16"><use href="#xf"/></svg>simulation.xml</div>
<div class="fr"><svg width="16" height="16"><use href="#xf"/></svg>tree.xml</div>
</div>
<div class="d-flex" style="margin-top:5px"><span class="jp" style="width:95px;padding-top:4px">ファイル名:</span><div class="fld" style="width:291px;height:20px;margin-top:3px"></div><div class="xb jp text-center" style="width:63px;height:22px;line-height:20px;margin-left:11px">開く</div></div>
<div class="d-flex" style="margin-top:6px"><span class="jp" style="width:95px;padding-top:2px">ファイルタイプ:</span><div class="fld" style="width:291px;height:20px;margin-top:3px;padding:0 1px">XML files (.xml)<span class="ms-auto" style="background:#c3d3fc"><svg width="14" height="16"><use href="#dn"/></svg></span></div><div class="xb jp text-center" style="width:63px;height:22px;line-height:20px;margin-left:11px">取消し</div></div>
</div>
</div>
</div>
</section>

<div class="ime">
<svg width="24" height="24" viewBox="0 0 24 24" style="margin-left:6px;overflow:visible"><path d="M-3 2h3v3h-3z" fill="#402020"/><circle cx="11" cy="10" r="6.500" fill="#d01828"/><circle cx="9" cy="7" r="2" fill="#f8a0a0"/><path d="M12 19q7 3 8-4v-6" fill="none" stroke="#444" stroke-width="2"/><path d="M18 4v4" stroke="#e08820" stroke-width="2"/></svg>
<span style="margin-left:12px">A</span><span style="margin-left:4px">般</span>
<svg style="margin-left:6px" width="18" height="18" viewBox="0 0 18 18"><path d="M2 12l10-3 4 4-6 4H4z" fill="#e8d840" stroke="#555" stroke-width=".6"/><path d="M3 3l3-1 2 6-4 1z" fill="#8a4420"/><circle cx="12" cy="5" r="3.500" fill="#b8d8f0" stroke="#456"/></svg>
<svg style="margin-left:7px" width="18" height="18" viewBox="0 0 18 18"><path d="M1 7l10-5 6 3v6L7 17l-6-4z" fill="#9a78b0" stroke="#403050"/><path d="M1 7l10-5 6 3-9 5z" fill="#eee8c8" stroke="#403050"/><path d="M6 6l6-3" stroke="#222"/></svg>
</div>

<footer id="task">
<div class="start"><svg width="20" height="20" viewBox="0 0 20 20"><path d="M3 3q4-2 7 0L8.500 9q-4-2-7 0z" fill="#f0582a"/><path d="M11 3.500q4 2 8 0L17.500 9q-4 2-8 0z" fill="#8cc63c"/><path d="M1.200 10.200q4-2 7 0l-1.500 6q-4-2-7 0z" fill="#4a90f0"/><path d="M9.200 10.500q4 2 8 0l-1.500 6q-4 2-8 0z" fill="#fcd030"/></svg><span>スタート</span></div>
<div class="dots" style="margin-left:9px"></div>
<div class="d-flex align-items-center" style="gap:7px;margin-left:7px;width:383px;padding-top:5px">
<svg width="16" height="16" viewBox="0 0 16 16"><circle cx="8" cy="8.500" r="5.500" fill="none" stroke="#6cc4f8" stroke-width="2.500"/><path d="M3 8.500h11M1 13Q8 4 15 2" stroke="#a8e0fc" stroke-width="1.800" fill="none"/></svg>
<svg width="16" height="16" viewBox="0 0 16 16"><path d="M1 1h11l3 3v11H1z" fill="#f4f0f0" stroke="#888"/><path d="M3 13Q8 8 7 3q2 7 7 8-6-1-11 2z" fill="none" stroke="#d02020" stroke-width="1.500"/></svg>
<svg width="16" height="16" viewBox="0 0 16 16"><path d="M2 4h14v10H2z" fill="#fff" stroke="#222"/><path d="M4 8h5M4 11h6" stroke="#44a"/><path d="M11 6h3v3h-3z" fill="#d22"/><path d="M0 0l3 2 3-2-1 3 1 3-3-1-3 1 1-3z" fill="#20c030"/></svg>
<svg width="16" height="16" viewBox="0 0 16 16"><path d="M1 9L13 0l-2 5 4 1L4 16l2-6z" fill="#f8b828" stroke="#865810"/></svg>
<svg width="16" height="16" viewBox="0 0 16 16"><circle cx="8" cy="8" r="7" fill="#f08828"/><path d="M8 1a7 7 0 0 1 7 7H8z" fill="#4a9ae8"/><path d="M15 8a7 7 0 0 1-7 7V8z" fill="#48b048"/><circle cx="8" cy="8" r="4.500" fill="#fff"/><path d="M6.500 5.500l4 2.500-4 2.500z" fill="#224"/></svg>
<svg width="16" height="16" viewBox="0 0 16 16"><path d="M6 0h7v6H6zM1 9h7v5H1z" fill="#4a78a8" stroke="#ccc"/><path d="M13 7L5 9l6 1-6 4" stroke="#f8e028" fill="none" stroke-width="1.500"/></svg>
<svg width="16" height="16" viewBox="0 0 16 16"><path d="M1 3h7M2 3v8M2 7h4M8 5h5M10 5v8" stroke="#30d830" stroke-width="2"/><path d="M5 10v5M5 11h4" stroke="#e82020" stroke-width="2"/><path d="M12 7h3v4h-3v3" stroke="#f0d020" stroke-width="1.500" fill="none"/></svg>
<svg width="16" height="16"><use href="#cmd"/></svg>
<svg width="16" height="16" viewBox="0 0 16 16"><path d="M13 1v4H8v6h5v4H6l-4-3V4l4-3z" fill="#111"/><path d="M8 7h7v2H8z" fill="#20c858"/></svg>
<svg width="16" height="16" viewBox="0 0 16 16"><path d="M1 1.500h14v13H1z" fill="#f4f2e8" stroke="#111"/><path d="M1 2h14v3H1z" fill="#2a54b8"/><circle cx="8" cy="10" r="2" fill="#777" stroke="#111"/></svg>
<svg width="16" height="16" viewBox="0 0 16 16"><path d="M7 0h8v15H7z" fill="#b8c8c0" stroke="#222"/><path d="M8 2h6v8H8z" fill="#28c070"/><path d="M0 3h6M0 6h6M0 9h6" stroke="#fff" stroke-width="1.500"/></svg>
<svg width="16" height="16" viewBox="0 0 16 16"><path d="M5 8h7l-1 7H6z" fill="#c8b898"/><path d="M6 8L3 1M8 8V1M10 8l3-7" stroke="#e0a060" stroke-width="2"/></svg>
<svg width="16" height="16" viewBox="0 0 16 16"><path d="M0 0h16v16H0z" fill="#c4c8f8"/><path d="M6 2v6H2M14 9h-4v5h4" stroke="#223a90" stroke-width="2" fill="none"/></svg>
<svg width="16" height="16" viewBox="0 0 16 16"><path d="M.5 1.500h15v13H.5z" fill="#fdfcf4" stroke="#111"/><path d="M1 2h14v2H1z" fill="#2a54b8"/></svg>
<svg width="16" height="16" viewBox="0 0 16 16"><path d="M1 4q5-5 12-2l2 6-2 7H6l3-6-6 1z" fill="#b83a20" stroke="#601808"/><path d="M5 5l3 1" stroke="#fc8"/></svg>
<svg width="16" height="16" viewBox="0 0 16 16"><path d="M3 3l8-2 3 3v9l-8 3-4-3z" fill="#bce4f8" stroke="#3a7ab8"/><path d="M12 4L7 9l-1 3 3-1 4-5" fill="none" stroke="#1a50a0" stroke-width="1.300"/></svg>
</div>
<div class="dots" style="margin-right:6px"></div>
<div class="tk"><svg width="16" height="16"><use href="#sf"/></svg><span style="transform:scaleX(.9)">execnew</span></div>
<div class="tk"><svg width="16" height="16"><use href="#cmd"/></svg><span style="transform:scaleX(.76)">コマンド プロンプト</span></div>
<div class="tk"><svg width="16" height="16"><use href="#cmd"/></svg><span style="transform:scaleX(.79)">コマンド プロンプト - e...</span></div>
<div class="tk on"><svg width="15" height="12" viewBox="0 0 15 12"><path d="M0 0h15v12H0z" fill="#fff"/><path d="M0 0h15v1.500H0z" fill="#c8d4f8"/></svg><b>2</b><span style="transform:scaleX(.9)">java</span><svg class="ms-auto me-1" width="6" height="4"><path d="M0 0h6L3 3z" fill="#fff"/></svg></div>
<div class="tray">
<svg width="17" height="17" viewBox="0 0 17 17"><path d="M8 1l8 8v5q-4 3-7-1L5 8z" fill="#e8e8f0" stroke="#667"/><path d="M9 1L2 9h4l-4 6 9-8H7z" fill="#e81828"/></svg>
<svg width="17" height="17" viewBox="0 0 17 17"><path d="M1 3l12-2 3 3v10l-8 2-1-4 2-3-6 1-2-3z" fill="#b84838" stroke="#602018"/><path d="M4 5q5-3 8 0l-1 5-2 3 1-5z" fill="#e87858"/></svg>
<svg width="17" height="17" viewBox="0 0 17 17"><path d="M2 2l12 12M15 2L3 14" stroke="#222" stroke-width="3.500"/><path d="M2 2l12 12M15 2L3 14" stroke="#d8d8d8" stroke-width="1.500"/><circle cx="4" cy="13" r="2.500" fill="#333" stroke="#ccc"/><circle cx="13" cy="13" r="2.500" fill="#333" stroke="#ccc"/></svg>
<span class="ms-1" style="letter-spacing:-.7px">21:38</span>
</div>
</footer>
</body>
</html>
